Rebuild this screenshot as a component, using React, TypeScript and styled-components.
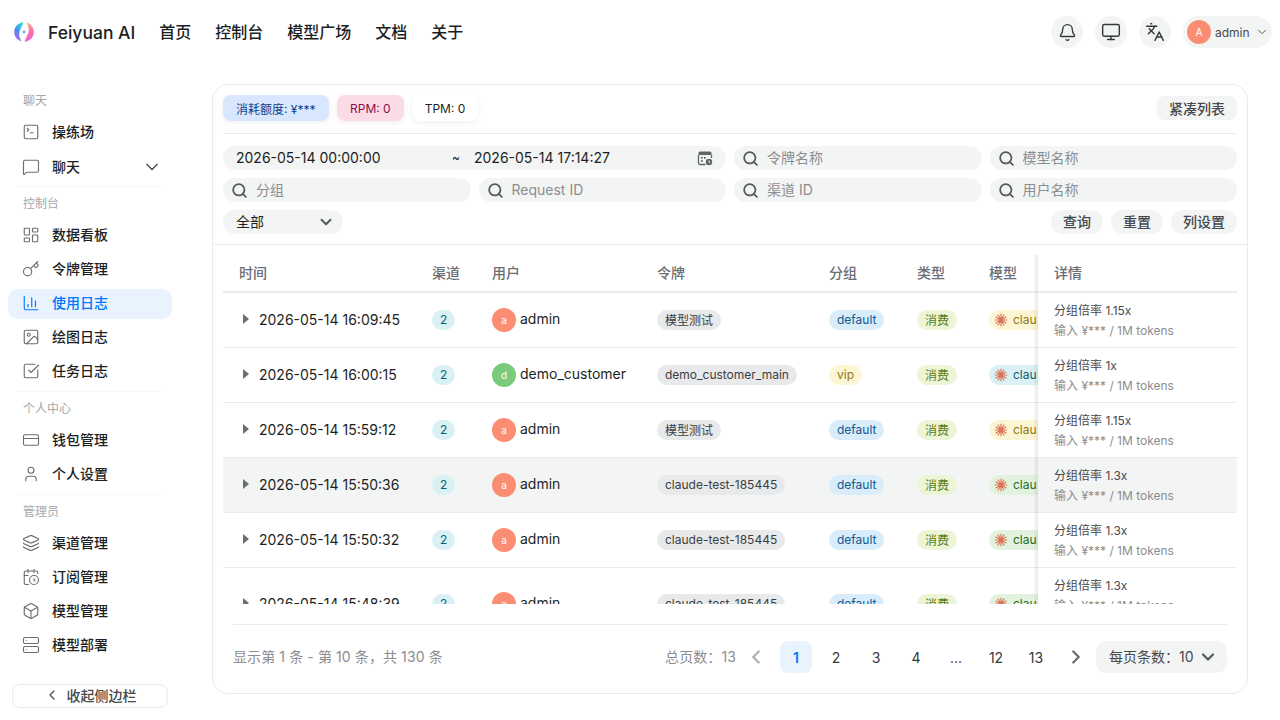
import React, { FC } from "react";
import styled, { createGlobalStyle } from "styled-components";
import {
    Bell, Monitor, Languages, ChevronDown, ChevronLeft, ChevronRight, Search, SquareTerminal, MessageSquare,
    LayoutDashboard, Key, ChartColumn, Image as ImageIcon, SquareCheckBig, CreditCard, User, Layers, CalendarClock,
    Box, Server,
} from "lucide-react";

const GlobalStyle = createGlobalStyle`
  html, body {
    margin: 0;
    padding: 0;
    background: #fff;
    font-family: Inter, "Noto Sans CJK SC", sans-serif;
    color: #1c1f23;
  }
  * { box-sizing: border-box; }
`

const Page = styled.div`
  width: 1280px;
  height: 720px;
  overflow: hidden;
  display: flex;
  flex-direction: column;
`

const Header = styled.header`
  height: 64px;
  flex: none;
  display: flex;
  align-items: center;
  padding: 0 8px 0 14px;
`

const Brand = styled.span`
  font-size: 17.5px;
  font-weight: 500;
  margin-left: 14px;
  margin-right: 24px;
  white-space: nowrap;
`

const NavItem = styled.span`
  font-size: 16px;
  font-weight: 500;
  margin-right: 24px;
  padding-bottom: 2px;
  white-space: nowrap;
`

const HeaderRight = styled.div`
  margin-left: auto;
  display: flex;
  align-items: center;
  gap: 12px;
`

const RoundButton = styled.div`
  width: 32px;
  height: 32px;
  border-radius: 50%;
  background: #f3f4f4;
  display: flex;
  align-items: center;
  justify-content: center;
  color: #35383c;
`

const UserPill = styled.div`
  height: 32px;
  width: 89px;
  border-radius: 16px;
  background: #f3f4f4;
  display: flex;
  align-items: center;
  padding-left: 4px;
  font-size: 12px;
  color: #46494d;
`

const UserAvatar = styled.span`
  width: 24px;
  height: 24px;
  border-radius: 50%;
  background: #fb8d73;
  color: #fff;
  font-size: 10px;
  display: flex;
  align-items: center;
  justify-content: center;
  margin-right: 4px;
`

const UserArrow = styled(ChevronDown)`
  margin-left: 5px;
`

const Body = styled.div`
  flex: 1;
  display: flex;
  min-height: 0;
`

const Sidebar = styled.aside`
  width: 180px;
  flex: none;
  display: flex;
  flex-direction: column;
  padding: 0 8px;
`

const SideGroup = styled.div<{ $first?: boolean; $last?: boolean }>`
  padding-top: ${(p) => (p.$first ? "28px" : "8px")};
  padding-bottom: ${(p) => (p.$first ? "1px" : "2px")};
  border-bottom: 1px solid ${(p) => (p.$last ? "transparent" : "#f7f7f8")};
  margin: 0 8px;
`

const SideTitle = styled.div`
  font-size: 12px;
  line-height: 16px;
  height: 26px;
  padding: 1px 0 0 7px;
  color: #a5a7a9;
`

const SideItem = styled.div<{ $active?: boolean; $tall?: boolean }>`
  height: ${(p) => (p.$tall ? "31px" : "30px")};
  margin: 0 -8px 4px;
  padding: 0 10px 4px 14px;
  display: flex;
  align-items: center;
  border-radius: 10px;
  font-size: 14px;
  font-weight: 500;
  color: ${(p) => (p.$active ? "#0077fa" : "#1c1f23")};
  background: ${(p) => (p.$active ? "#e9f3fe" : "transparent")};

  &:last-child {
    margin-bottom: 2px;
  }

  & > svg:first-child {
    color: ${(p) => (p.$active ? "#0077fa" : "#6a6d71")};
    margin-right: 12px;
    margin-top: 2px;
    flex: none;
  }
`

const SideArrow = styled(ChevronDown)`
  margin-left: auto;
  margin-top: 2px;
  color: #55585c;
`

const Collapse = styled.div`
  margin: auto 4px 12px;
  height: 24px;
  flex: none;
  border: 1px solid #e9eaeb;
  border-radius: 8px;
  padding-bottom: 3px;
  display: flex;
  align-items: center;
  justify-content: center;
  gap: 7px;
  font-size: 14px;
  font-weight: 500;
  color: #45484c;
`

const Main = styled.main`
  flex: 1;
  padding: 20px 32px 26px;
  min-width: 0;
`

const Card = styled.section`
  height: 610px;
  width: 1036px;
  border: 1px solid #e9eaeb;
  border-radius: 16px;
  display: flex;
  flex-direction: column;
  overflow: hidden;
`

const Stats = styled.div`
  margin: 10px 10px 0;
  height: 39px;
  padding-bottom: 11px;
  display: flex;
  align-items: flex-start;
  gap: 8px;
  border-bottom: 1px solid #ececed;
`

const Stat = styled.span<{ $bg: string; $fg: string }>`
  height: 26px;
  padding: 0 13px;
  border-radius: 8px;
  display: flex;
  align-items: center;
  font-size: 12px;
  background: ${(p) => p.$bg};
  color: ${(p) => p.$fg};
  box-shadow: 0 2px 6px rgba(0, 0, 0, 0.06);

  &:first-child {
    min-width: 106px;
  }
`

const CompactButton = styled.span`
  margin-left: auto;
  margin-top: 1px;
  height: 24px;
  padding: 0 12px 1px;
  border-radius: 8px;
  background: #f3f4f4;
  color: #46494d;
  font-size: 14px;
  font-weight: 500;
  display: flex;
  align-items: center;
`

const Filters = styled.div`
  padding: 12px 10px 10px;
  display: grid;
  grid-template-columns: repeat(4, 1fr);
  gap: 8px;
  border-bottom: 1px solid #ececed;
`

const FieldBox = styled.div`
  height: 24px;
  border-radius: 12px;
  background: #f3f4f4;
  padding-bottom: 2px;
  display: flex;
  align-items: center;
  font-size: 14px;
`

const DateField = styled(FieldBox)`
  grid-column: span 2;
  padding-left: 13px;
  padding-right: 13px;
  color: #1c1f23;
`

const DateValue = styled.span<{ $wide?: boolean }>`
  width: ${(p) => (p.$wide ? "215px" : "auto")};
  flex: none;
`

const Tilde = styled.span`
  width: 23px;
  padding-left: 1px;
  font-size: 12px;
  flex: none;
`

const DateIconWrap = styled.span`
  margin-left: auto;
  margin-bottom: -2px;
  display: flex;
`

const SearchField = styled(FieldBox)`
  padding-left: 8px;
  color: #8b8d90;

  & svg {
    color: #55585c;
    margin-right: 8px;
    margin-bottom: -2px;
    flex: none;
  }
`

const ActionRow = styled.div`
  grid-column: span 4;
  display: flex;
  gap: 8px;
`

const SelectField = styled(FieldBox)`
  width: 120px;
  padding-left: 13px;
  padding-right: 8px;
  justify-content: space-between;
  color: #1c1f23;

  & svg {
    color: #55585c;
    margin-bottom: -2px;
  }
`

const ActionButton = styled.span`
  height: 24px;
  padding: 0 12px 2px;
  border-radius: 12px;
  background: #f3f4f4;
  color: #46494d;
  font-size: 14px;
  font-weight: 500;
  display: flex;
  align-items: center;

  &:first-of-type {
    margin-left: auto;
  }
`

const TableWrap = styled.div`
  margin: 10px 10px 0;
  height: 349px;
  flex: none;
  overflow: hidden;
  position: relative;
`

const Table = styled.table`
  border-collapse: collapse;
  table-layout: fixed;
  width: 1014px;
  font-size: 14px;
`

const HeadCell = styled.th`
  height: 37px;
  padding: 0 0 2px 16px;
  text-align: left;
  font-size: 14px;
  font-weight: 500;
  color: #6b6e72;
  border-bottom: 2px solid #ececed;
  background: #fff;
`

const Cell = styled.td`
  height: 55px;
  padding: 0 0 0 16px;
  border-bottom: 1px solid #ececed;
  white-space: nowrap;
  overflow: hidden;
`

const Row = styled.tr<{ $hover?: boolean; $tall?: boolean }>`
  background: ${(p) => (p.$hover ? "#f3f4f4" : "#fff")};
  height: ${(p) => (p.$tall ? "73px" : "55px")};
`

const DetailCell = styled(Cell)`
  vertical-align: top;
  padding-top: 8px;
  line-height: 20px;
`

const ShadowLine = styled.div`
  position: absolute;
  top: 0;
  bottom: 0;
  left: 811px;
  width: 4px;
  background: linear-gradient(to right, rgba(0, 0, 0, 0.03), rgba(0, 0, 0, 0.07));
`

const TimeCell = styled.span`
  display: flex;
  align-items: center;
  gap: 10px;
  margin-left: 4px;
`

const Caret = styled.i`
  width: 0;
  height: 0;
  flex: none;
  border-style: solid;
  border-width: 5px 0 5px 6px;
  border-color: transparent transparent transparent #6b6e72;
  margin-bottom: 2px;
`

const Tag = styled.span<{ $bg: string; $fg: string }>`
  display: inline-flex;
  align-items: center;
  height: 20px;
  border-radius: 10px;
  padding: 0 8px;
  font-size: 12px;
  background: ${(p) => p.$bg};
  color: ${(p) => p.$fg};
`

const ModelTag = styled(Tag)`
  padding: 0 0 0 5px;
  width: 49px;
  gap: 5px;
  border-radius: 10px 0 0 10px;
  overflow: hidden;

  & svg {
    flex: none;
  }
`

const UserCell = styled.span`
  display: flex;
  align-items: center;
  gap: 4px;
`

const UserName = styled.span`
  padding-bottom: 3px;
`

const RowAvatar = styled.span<{ $bg: string }>`
  width: 24px;
  height: 24px;
  border-radius: 50%;
  background: ${(p) => p.$bg};
  color: #fff;
  font-size: 10px;
  display: flex;
  align-items: center;
  justify-content: center;
`

const DetailMain = styled.div`
  font-size: 12px;
  color: #46494d;
`

const DetailSub = styled.div`
  font-size: 12px;
  color: #8b8d90;
`

const Footer = styled.div`
  margin: 20px 20px 0;
  padding-top: 16px;
  border-top: 1px solid #ececed;
  display: flex;
  align-items: center;
  font-size: 14px;
  color: #8b8d90;
`

const FooterNote = styled.span`
  padding-bottom: 2px;
  letter-spacing: 0.1px;
`

const FooterRight = styled.div`
  margin-left: auto;
  display: flex;
  align-items: center;
`

const PageButton = styled.span<{ $active?: boolean; $muted?: boolean }>`
  width: 32px;
  height: 32px;
  margin: 0 4px;
  border-radius: 8px;
  display: flex;
  align-items: center;
  justify-content: center;
  font-weight: ${(p) => (p.$active ? 600 : 400)};
  background: ${(p) => (p.$active ? "#e9f3fe" : "transparent")};
  color: ${(p) => (p.$active ? "#0077fa" : "#35383c")};
`

const ArrowButton = styled(PageButton)`
  color: ${(p) => (p.$muted ? "#aeb0b2" : "#6b6e72")};
`

const PageSize = styled.div`
  width: 131px;
  height: 32px;
  border-radius: 10px;
  background: #f3f4f4;
  padding: 0 9px 2px 13px;
  display: flex;
  align-items: center;
  justify-content: space-between;
  color: #46494d;

  & svg {
    color: #55585c;
    margin-bottom: -2px;
  }
`

const Logo: FC = () => (
    <svg width="20" height="20" viewBox="0 0 20 20">
        <defs>
            <linearGradient id="logoLeft" x1="0.7" y1="0" x2="0.3" y2="1">
                <stop offset="0" stopColor="#2fe0d0" />
                <stop offset="0.5" stopColor="#4a8df5" />
                <stop offset="1" stopColor="#c05cf2" />
            </linearGradient>
            <linearGradient id="logoRight" x1="0.4" y1="0" x2="0.6" y2="1">
                <stop offset="0" stopColor="#ffb27a" />
                <stop offset="0.45" stopColor="#ff6fa8" />
                <stop offset="1" stopColor="#f060d0" />
            </linearGradient>
        </defs>
        <path d="M9.500 0.300C4.200 0.600 0.200 4.800 0.200 10C0.200 14.600 3.300 18.300 7.500 19.400C6.400 17.200 5 14.500 5.200 11.500C5.400 8 8.200 4.500 9.500 0.300Z" fill="url(#logoLeft)" />
        <path d="M10.500 19.700C15.800 19.400 19.800 15.200 19.800 10C19.800 5.400 16.700 1.700 12.500 0.600C13.600 2.800 15 5.500 14.800 8.500C14.600 12 11.800 15.500 10.500 19.700Z" fill="url(#logoRight)" />
        <circle cx="10" cy="10" r="1.400" fill="#6fa8f5" />
    </svg>
)

const Spark: FC = () => (
    <svg width="14" height="14" viewBox="0 0 14 14" stroke="#dc7356" strokeWidth="1.2" strokeLinecap="round">
        <path d="M7 1.200V12.800M1.200 7H12.800M9.900 2L4.100 12M4.100 2L9.900 12M12 4.100L2 9.900M2 4.100L12 9.900" />
    </svg>
)

const CalendarClockIcon: FC = () => (
    <svg width="16" height="16" viewBox="0 0 16 16">
        <path d="M3 1.500H13A1.500 1.500 0 0 1 14.500 3V5H1.500V3A1.500 1.500 0 0 1 3 1.500Z" fill="#5f6266" />
        <path d="M1.500 5V13A1.500 1.500 0 0 0 3 14.500H8.500M14.500 5V8" fill="none" stroke="#5f6266" strokeWidth="1.300" />
        <rect x="4" y="7" width="1.700" height="1.700" fill="#5f6266" />
        <rect x="7" y="7" width="1.700" height="1.700" fill="#5f6266" />
        <rect x="4" y="10.200" width="1.700" height="1.700" fill="#5f6266" />
        <circle cx="12" cy="12" r="3.200" fill="#5f6266" />
        <path d="M12 10.500V12.200H13.300" fill="none" stroke="#fff" strokeWidth="0.900" />
    </svg>
)

interface LogRow {
    time: string
    user: string
    token: string
    group: string
    model: [string, string]
    rate: string
    hover?: boolean
    tall?: boolean
}

const groupColors: { [key: string]: [string, string] } = {
    default: ["#d9ecf9", "#0f5a94"],
    vip: ["#fdf6d4", "#8a7a14"],
}

const yellow: [string, string] = ["#fdf6d4", "#8a7a14"]
const cyan: [string, string] = ["#d9f1f4", "#0b5e6e"]
const green: [string, string] = ["#e1f3df", "#246b2a"]

const rows: LogRow[] = [
    { time: "2026-05-14 16:09:45", user: "admin", token: "模型测试", group: "default", model: yellow, rate: "1.15x" },
    { time: "2026-05-14 16:00:15", user: "demo_customer", token: "demo_customer_main", group: "vip", model: cyan, rate: "1x" },
    { time: "2026-05-14 15:59:12", user: "admin", token: "模型测试", group: "default", model: yellow, rate: "1.15x" },
    { time: "2026-05-14 15:50:36", user: "admin", token: "claude-test-185445", group: "default", model: green, rate: "1.3x", hover: true },
    { time: "2026-05-14 15:50:32", user: "admin", token: "claude-test-185445", group: "default", model: green, rate: "1.3x" },
    { time: "2026-05-14 15:48:39", user: "admin", token: "claude-test-185445", group: "default", model: green, rate: "1.3x", tall: true },
]

const columns: [string, number][] = [
    ["时间", 193], ["渠道", 60], ["用户", 165], ["令牌", 172], ["分组", 88], ["类型", 72], ["模型", 65],
]

const sideIcon = { size: 18, strokeWidth: 1.5 }
const searchIcon = { size: 17, strokeWidth: 2.5 }

const App: FC = () => {
    return (
        <Page>
            <GlobalStyle />
            <Header>
                <Logo />
                <Brand>Feiyuan AI</Brand>
                <NavItem>首页</NavItem>
                <NavItem>控制台</NavItem>
                <NavItem>模型广场</NavItem>
                <NavItem>文档</NavItem>
                <NavItem>关于</NavItem>
                <HeaderRight>
                    <RoundButton><Bell size={19} strokeWidth={1.7} /></RoundButton>
                    <RoundButton><Monitor size={20} strokeWidth={1.7} /></RoundButton>
                    <RoundButton><Languages size={20} strokeWidth={1.7} /></RoundButton>
                    <UserPill>
                        <UserAvatar>A</UserAvatar>
                        admin
                        <UserArrow size={14} strokeWidth={1.5} />
                    </UserPill>
                </HeaderRight>
            </Header>
            <Body>
                <Sidebar>
                    <SideGroup $first>
                        <SideTitle>聊天</SideTitle>
                        <SideItem><SquareTerminal {...sideIcon} />操练场</SideItem>
                        <SideItem $tall><MessageSquare {...sideIcon} />聊天<SideArrow size={20} strokeWidth={2} /></SideItem>
                    </SideGroup>
                    <SideGroup>
                        <SideTitle>控制台</SideTitle>
                        <SideItem><LayoutDashboard {...sideIcon} />数据看板</SideItem>
                        <SideItem><Key {...sideIcon} />令牌管理</SideItem>
                        <SideItem $active><ChartColumn {...sideIcon} />使用日志</SideItem>
                        <SideItem><ImageIcon {...sideIcon} />绘图日志</SideItem>
                        <SideItem><SquareCheckBig {...sideIcon} />任务日志</SideItem>
                    </SideGroup>
                    <SideGroup>
                        <SideTitle>个人中心</SideTitle>
                        <SideItem><CreditCard {...sideIcon} />钱包管理</SideItem>
                        <SideItem><User {...sideIcon} />个人设置</SideItem>
                    </SideGroup>
                    <SideGroup $last>
                        <SideTitle>管理员</SideTitle>
                        <SideItem><Layers {...sideIcon} />渠道管理</SideItem>
                        <SideItem><CalendarClock {...sideIcon} />订阅管理</SideItem>
                        <SideItem><Box {...sideIcon} />模型管理</SideItem>
                        <SideItem><Server {...sideIcon} />模型部署</SideItem>
                    </SideGroup>
                    <Collapse><ChevronLeft size={16} strokeWidth={1.8} />收起侧边栏</Collapse>
                </Sidebar>
                <Main>
                    <Card>
                        <Stats>
                            <Stat $bg="#d8e7fd" $fg="#0a3f8f">消耗额度: ¥***</Stat>
                            <Stat $bg="#fbdce6" $fg="#8c1044">RPM: 0</Stat>
                            <Stat $bg="#fff" $fg="#1c1f23">TPM: 0</Stat>
                            <CompactButton>紧凑列表</CompactButton>
                        </Stats>
                        <Filters>
                            <DateField>
                                <DateValue $wide>2026-05-14 00:00:00</DateValue>
                                <Tilde>~</Tilde>
                                <DateValue>2026-05-14 17:14:27</DateValue>
                                <DateIconWrap><CalendarClockIcon /></DateIconWrap>
                            </DateField>
                            <SearchField><Search {...searchIcon} />令牌名称</SearchField>
                            <SearchField><Search {...searchIcon} />模型名称</SearchField>
                            <SearchField><Search {...searchIcon} />分组</SearchField>
                            <SearchField><Search {...searchIcon} />Request ID</SearchField>
                            <SearchField><Search {...searchIcon} />渠道 ID</SearchField>
                            <SearchField><Search {...searchIcon} />用户名称</SearchField>
                            <ActionRow>
                                <SelectField>全部<ChevronDown size={18} strokeWidth={2.6} /></SelectField>
                                <ActionButton>查询</ActionButton>
                                <ActionButton>重置</ActionButton>
                                <ActionButton>列设置</ActionButton>
                            </ActionRow>
                        </Filters>
                        <TableWrap>
                            <Table>
                                <colgroup>
                                    {columns.map((c) => <col key={c[0]} width={c[1]} />)}
                                    <col width={199} />
                                </colgroup>
                                <thead>
                                    <tr>
                                        {columns.map((c) => <HeadCell key={c[0]}>{c[0]}</HeadCell>)}
                                        <HeadCell>详情</HeadCell>
                                    </tr>
                                </thead>
                                <tbody>
                                    {rows.map((r) => {
                                        const groupColor = groupColors[r.group]
                                        return (
                                            <Row key={r.time} $hover={r.hover} $tall={r.tall}>
                                                <Cell>
                                                    <TimeCell><Caret />{r.time}</TimeCell>
                                                </Cell>
                                                <Cell><Tag $bg="#d9f1f4" $fg="#0b5e6e">2</Tag></Cell>
                                                <Cell>
                                                    <UserCell>
                                                        <RowAvatar $bg={r.user === "admin" ? "#fb8d73" : "#7acb7a"}>{r.user[0]}</RowAvatar>
                                                        <UserName>{r.user}</UserName>
                                                    </UserCell>
                                                </Cell>
                                                <Cell><Tag $bg="#e8e9ea" $fg="#3b3e42">{r.token}</Tag></Cell>
                                                <Cell><Tag $bg={groupColor[0]} $fg={groupColor[1]}>{r.group}</Tag></Cell>
                                                <Cell><Tag $bg="#ecf5d6" $fg="#5c7a12">消费</Tag></Cell>
                                                <Cell>
                                                    <ModelTag $bg={r.model[0]} $fg={r.model[1]}><Spark />clau</ModelTag>
                                                </Cell>
                                                <DetailCell>
                                                    <DetailMain>分组倍率 {r.rate}</DetailMain>
                                                    <DetailSub>输入 ¥*** / 1M tokens</DetailSub>
                                                </DetailCell>
                                            </Row>
                                        )
                                    })}
                                </tbody>
                            </Table>
                            <ShadowLine />
                        </TableWrap>
                        <Footer>
                            <FooterNote>显示第 1 条 - 第 10 条，共 130 条</FooterNote>
                            <FooterRight>
                                <FooterNote>总页数：13</FooterNote>
                                <ArrowButton $muted><ChevronLeft size={22} strokeWidth={2.5} /></ArrowButton>
                                <PageButton $active>1</PageButton>
                                <PageButton>2</PageButton>
                                <PageButton>3</PageButton>
                                <PageButton>4</PageButton>
                                <PageButton>...</PageButton>
                                <PageButton>12</PageButton>
                                <PageButton>13</PageButton>
                                <ArrowButton><ChevronRight size={22} strokeWidth={2.5} /></ArrowButton>
                                <PageSize>每页条数：10<ChevronDown size={20} strokeWidth={2.6} /></PageSize>
                            </FooterRight>
                        </Footer>
                    </Card>
                </Main>
            </Body>
        </Page>
    )
}

export default App
